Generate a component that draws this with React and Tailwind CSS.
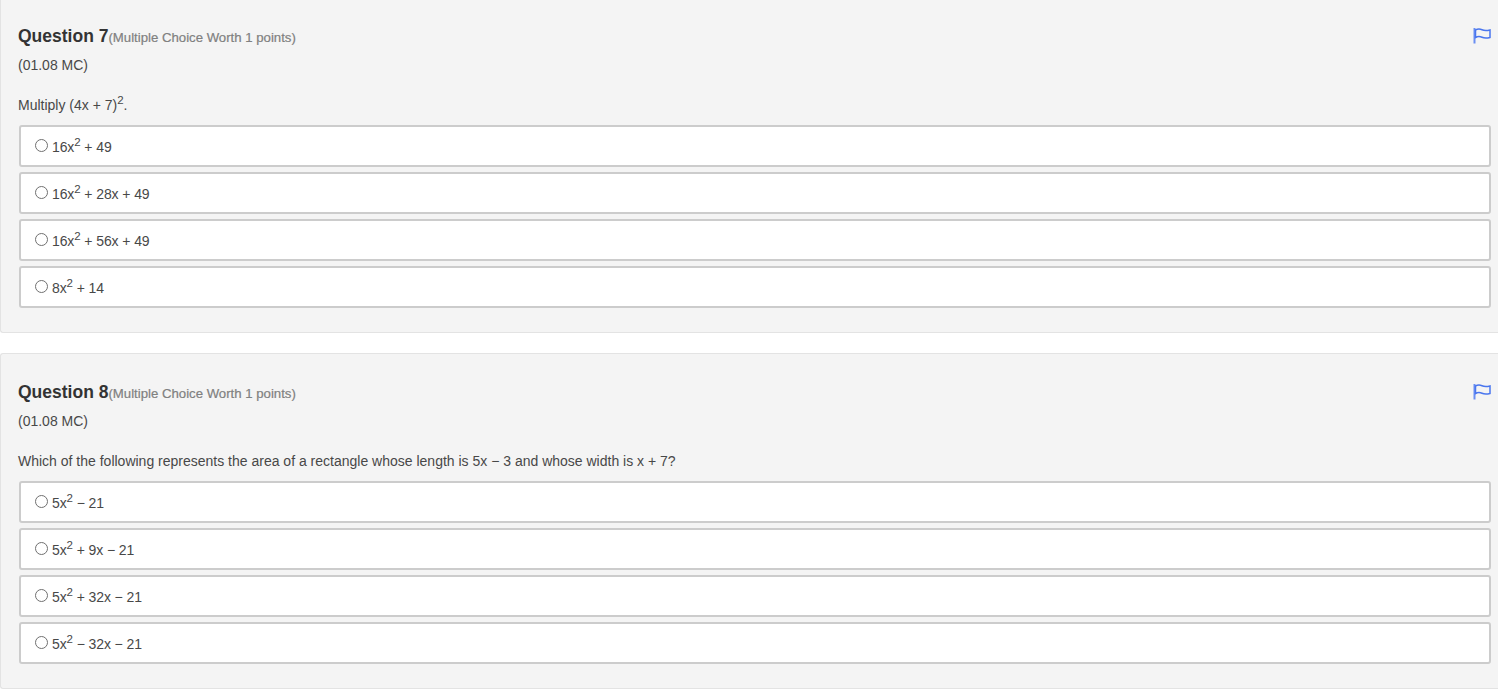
import React from 'react';

const Sup = ({ children }) => <sup className="text-[11.500px]">{children}</sup>;

const FlagIcon = () => (
  <svg width="18" height="16" viewBox="0 0 18 16" fill="none">
    <path d="M1.500 0v15.500" stroke="#6a8ff2" strokeWidth="2" />
    <path d="M2.500 2c2.500-1.300 4-1.300 6.500-.2s4.500 1 8 .2v7.500c-3.500.8-5.500.9-8-.2s-4-1.100-6.500.2z" stroke="#4a76ee" strokeWidth="1.500" />
  </svg>
);

const Option = ({ children }) => (
  <div className="flex items-center h-[42px] bg-white border-2 border-[#cccccc] rounded-[3px] pl-[14px]">
    <span className="w-[13px] h-[13px] rounded-full border border-[#707070] bg-white mr-[4px] -mt-[2px] shrink-0" />
    <span className="text-[14px] leading-5 tracking-[-0.1px] text-[#484848] pt-[2px]">{children}</span>
  </div>
);

const Question = ({ number, prompt, options, className }) => (
  <div className={`bg-[#f4f4f4] border border-r-0 border-[#e3e3e3] rounded-l-[3px] pl-[17px] pr-[7px] pb-[24px] ${className}`}>
    <div className="flex justify-between items-start pt-[26px]">
      <div className="flex items-baseline h-[24px] leading-6">
        <span className="text-[17.500px] font-bold text-[#333333]">Question {number}</span>
        <span className="text-[13.200px] text-[#808080] [-webkit-text-stroke:0.2px_#808080]">(Multiple Choice Worth 1 points)</span>
      </div>
      <div className="mt-[4px] -mb-[4px]"><FlagIcon /></div>
    </div>
    <p className="text-[14px] leading-5 text-[#484848] mt-[7px]">(01.08 MC)</p>
    <p className="text-[14px] leading-5 text-[#484848] mt-[20px]">{prompt}</p>
    <div className="flex flex-col gap-[5px] mt-[10px] ml-[1px]">
      {options.map((opt, i) => (
        <Option key={i}>{opt}</Option>
      ))}
    </div>
  </div>
);

export default function App() {
  return (
    <div className="font-['Liberation_Sans',Arial,sans-serif] bg-white h-[700px] overflow-hidden">
      <Question
        number={7}
        className="-mt-[3px]"
        prompt={<>Multiply (4x + 7)<Sup>2</Sup>.</>}
        options={[
          <>16x<Sup>2</Sup> + 49</>,
          <>16x<Sup>2</Sup> + 28x + 49</>,
          <>16x<Sup>2</Sup> + 56x + 49</>,
          <>8x<Sup>2</Sup> + 14</>,
        ]}
      />
      <Question
        number={8}
        className="mt-[20px]"
        prompt="Which of the following represents the area of a rectangle whose length is 5x − 3 and whose width is x + 7?"
        options={[
          <>5x<Sup>2</Sup> − 21</>,
          <>5x<Sup>2</Sup> + 9x − 21</>,
          <>5x<Sup>2</Sup> + 32x − 21</>,
          <>5x<Sup>2</Sup> − 32x − 21</>,
        ]}
      />
    </div>
  );
}
